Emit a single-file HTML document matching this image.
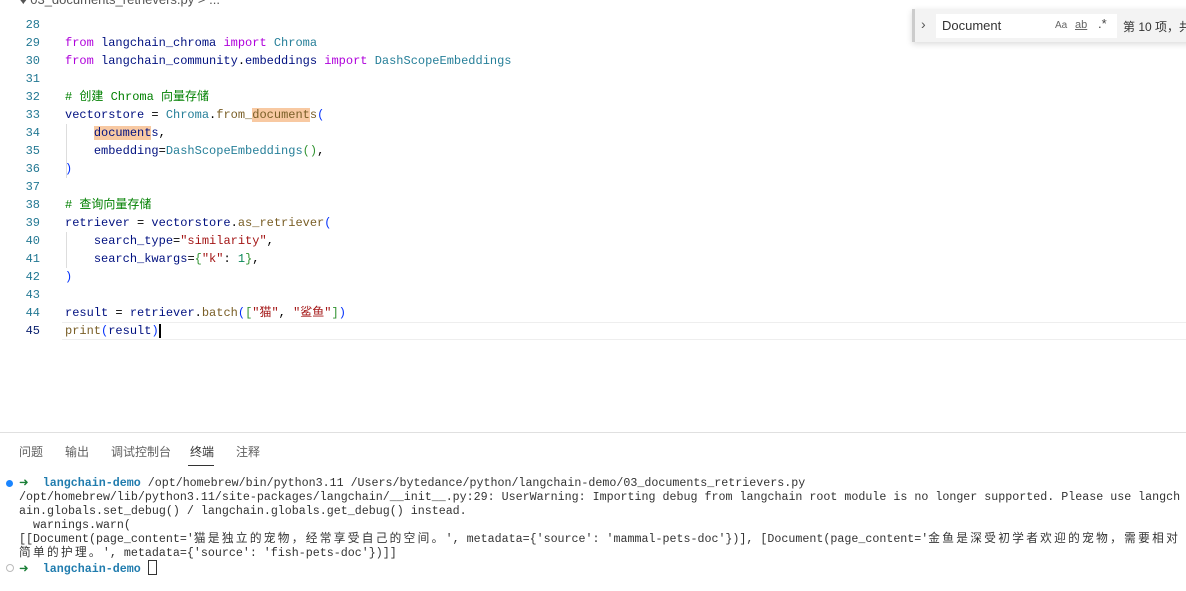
<!DOCTYPE html>
<html><head><meta charset="utf-8"><style>
body{margin:0;width:1186px;height:590px;background:#fff;overflow:hidden;position:relative;font-family:"Liberation Mono","Noto Sans CJK SC",monospace;}
.bc{position:absolute;left:20px;top:-8px;font:13px "Liberation Sans",sans-serif;color:#555;}
.ln{position:absolute;left:0;width:40px;text-align:right;font-size:12px;color:#237893;line-height:18px;}
.code{position:absolute;left:65px;font-size:12px;line-height:18px;white-space:pre;color:#000;}
.k{color:#af00db}.v{color:#001080}.c{color:#267f99}.f{color:#795e26}.cm{color:#008000}.s{color:#a31515}.n{color:#098658}.p{color:#0431fa}.b{color:#319331}
.hl{background:#f8c9a2}
.find{position:absolute;left:912px;top:9px;width:280px;height:33px;background:#f3f3f3;border-left:3px solid #ccc;box-shadow:0 2px 6px rgba(0,0,0,.15);font-family:"Liberation Sans","Noto Sans CJK SC",sans-serif;}
.find .in{position:absolute;left:21px;top:5px;width:181px;height:24px;background:#fff;}
.panel{position:absolute;left:0;top:432px;width:1186px;height:158px;border-top:1px solid #e0e0e0;}
.tab{position:absolute;top:10px;font:12px "Liberation Sans","Noto Sans CJK SC",sans-serif;color:#616161;}
.term{position:absolute;left:19px;top:43px;font-size:11.67px;line-height:14px;white-space:pre;color:#333;}
.term .z{letter-spacing:2.33px}
.g{color:#1a7f37}.t{color:#207cae;font-weight:bold}
</style></head><body>
<div class="bc">&#x2666; 03_documents_retrievers.py &gt; ...</div>
<div class="ln" style="top:16px">28<br>29<br>30<br>31<br>32<br>33<br>34<br>35<br>36<br>37<br>38<br>39<br>40<br>41<br>42<br>43<br>44<br><span style="color:#0b216f">45</span></div>
<div style="position:absolute;left:62px;top:322px;width:1124px;height:16px;border-top:1px solid #eee;border-bottom:1px solid #eee"></div>
<div style="position:absolute;left:66px;top:124px;height:54px;border-left:1px solid #ddd"></div>
<div style="position:absolute;left:66px;top:232px;height:36px;border-left:1px solid #ddd"></div>
<div class="code" style="top:34px"><span class="k">from</span> <span class="v">langchain_chroma</span> <span class="k">import</span> <span class="c">Chroma</span>
<span class="k">from</span> <span class="v">langchain_community</span>.<span class="v">embeddings</span> <span class="k">import</span> <span class="c">DashScopeEmbeddings</span>

<span class="cm"># 创建 Chroma 向量存储</span>
<span class="v">vectorstore</span> = <span class="c">Chroma</span>.<span class="f">from_<span class="hl">document</span>s</span><span class="p">(</span>
    <span class="v"><span class="hl">document</span>s</span>,
    <span class="v">embedding</span>=<span class="c">DashScopeEmbeddings</span><span class="b">()</span>,
<span class="p">)</span>

<span class="cm"># 查询向量存储</span>
<span class="v">retriever</span> = <span class="v">vectorstore</span>.<span class="f">as_retriever</span><span class="p">(</span>
    <span class="v">search_type</span>=<span class="s">"similarity"</span>,
    <span class="v">search_kwargs</span>=<span class="b">{</span><span class="s">"k"</span>: <span class="n">1</span><span class="b">}</span>,
<span class="p">)</span>

<span class="v">result</span> = <span class="v">retriever</span>.<span class="f">batch</span><span class="p">(</span><span class="b">[</span><span class="s">"猫"</span>, <span class="s">"鲨鱼"</span><span class="b">]</span><span class="p">)</span>
<span class="f">print</span><span class="p">(</span><span class="v">result</span><span class="p">)</span><span style="border-left:2px solid #000;margin-left:0"></span></div>
<div class="find">
<div style="position:absolute;left:6px;top:7px;font-size:14px;color:#555">›</div>
<div class="in"><span style="position:absolute;left:6px;top:4px;font-size:13px;color:#333">Document</span>
<span style="position:absolute;left:119px;top:6px;font-size:10px;color:#666">Aa</span>
<span style="position:absolute;left:139px;top:5px;font-size:11px;color:#666;text-decoration:underline">ab</span>
<span style="position:absolute;left:162px;top:2px;font-size:13px;color:#444">.*</span></div>
<div style="position:absolute;left:208px;top:9px;font-size:12px;color:#333;white-space:nowrap">第 10 项，共</div>
</div>
<div class="panel">
<span class="tab" style="left:19px">问题</span>
<span class="tab" style="left:65px">输出</span>
<span class="tab" style="left:111px">调试控制台</span>
<span class="tab" style="left:190px;color:#333">终端</span>
<div style="position:absolute;left:188px;top:32px;width:26px;height:1px;background:#333"></div>
<span class="tab" style="left:236px">注释</span>
<div style="position:absolute;left:6px;top:47px;width:7px;height:7px;border-radius:50%;background:#1a85ff"></div>
<div style="position:absolute;left:6px;top:131px;width:6px;height:6px;border-radius:50%;border:1px solid #bbb"></div>
<div class="term"><span class="g">➜</span>  <span class="t">langchain-demo</span> /opt/homebrew/bin/python3.11 /Users/bytedance/python/langchain-demo/03_documents_retrievers.py
/opt/homebrew/lib/python3.11/site-packages/langchain/__init__.py:29: UserWarning: Importing debug from langchain root module is no longer supported. Please use langch
ain.globals.set_debug() / langchain.globals.get_debug() instead.
  warnings.warn(
[[Document(page_content='<span class="z">猫是独立的宠物，经常享受自己的空间。</span>', metadata={'source': 'mammal-pets-doc'})], [Document(page_content='<span class="z">金鱼是深受初学者欢迎的宠物，需要相对</span>
<span class="z">简单的护理。</span>', metadata={'source': 'fish-pets-doc'})]]
<span class="g">➜</span>  <span class="t">langchain-demo</span> <span style="display:inline-block;width:7px;height:13px;border:1px solid #333;vertical-align:-3px"></span></div>
</div>
</body></html>
